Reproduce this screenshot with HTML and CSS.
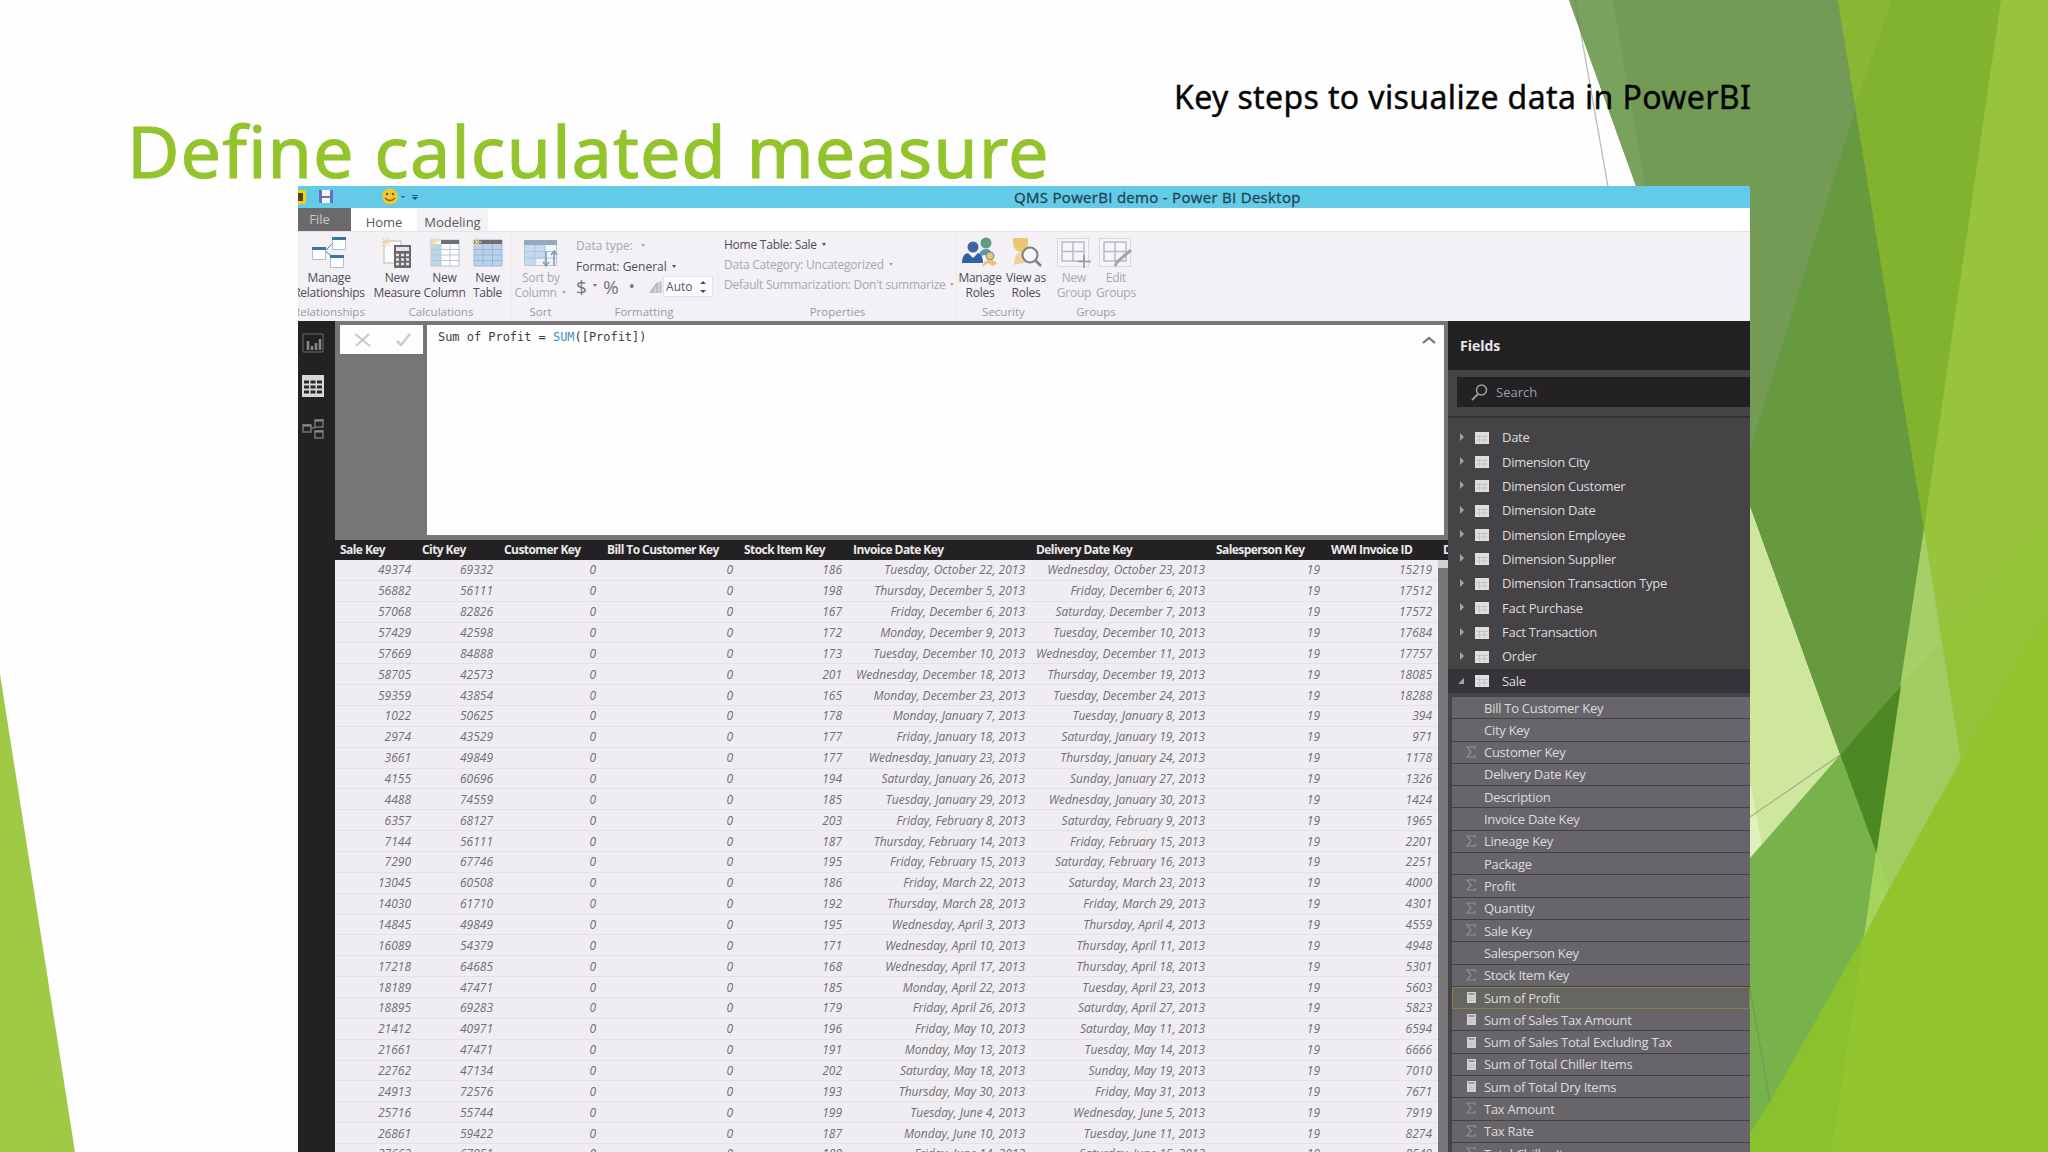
FILE: index.html
```
<!DOCTYPE html>
<html lang="en">
<head>
    <meta charset="UTF-8">
    <meta name="viewport" content="width=device-width, initial-scale=1.0">
    <title>Define calculated measure</title>
    <link rel="stylesheet" href="styles.css">
</head>
<body>
    <div class="slide">
        <svg class="facets" viewBox="0 0 2048 1152">
            <polygon points="0,674 75,1152 0,1152" fill="#a0ca45"/>
            <!-- solid ground so no white shows between the facets -->
            <polygon points="1842,0 2048,0 2048,1152 1752,1152 1868,925 1885,889 1900,687 1920,529" fill="#8fc040"/>
            <polygon points="1569,0 1840,0 1926,529 1902,687 1840,755 1636,186" fill="#739b55"/>
            <polygon points="1569,0 1613,0 1645,186 1636,186" fill="#79a25f"/>
            <polygon points="1855,110 1926,529 1902,687 1840,755 1750,507 1750,450" fill="#67993f"/>
            <polygon points="1750,507 1840,755 1750,858" fill="#cee79c"/>
            <polygon points="1750,782 1762,845 1750,858" fill="#ddf1bc"/>
            <polygon points="1750,858 1840,755 1891,889 1866,945 1750,1152" fill="#78b24b"/>
            <polygon points="1840,755 1902,685 1877,854" fill="#4c8922"/>
            <polygon points="1838,0 2002,0 1924,530" fill="#82b32e"/>
            <polygon points="1838,0 1892,0 1855,105" fill="#87b733"/>
            <polygon points="2001,0 2048,0 2048,612 1961,761 1924,529" fill="#97c43c"/>
            <polygon points="2048,518 2048,612 1961,761 1941,643" fill="#95c338"/>
            <polygon points="1924,529 1961,761 1889,890 1864,938" fill="#a1cc5f"/>
            <polygon points="1924,529 1941,643 1900,687" fill="#a4d067"/>
            <polygon points="1876,852 1889,889 1864,938" fill="#a4d35e"/>
            <polygon points="2048,611 2048,1152 1738,1152 1770,1102 1864,937 1889,889 1961,760" fill="#92c42e"/>
            <polygon points="1864,935 1831,1152 1738,1152 1770,1102" fill="#8bc12c"/>
            <path d="M1575 0L1770 1102M1840 755L1750 817" fill="none" stroke="#70816a" stroke-opacity=".5" stroke-width="1.3"/>
        </svg>

        <h1 class="slide-title">Define calculated measure</h1>
        <div class="slide-note">Key steps to visualize data in PowerBI</div>

        <div class="app">
            <div class="titlebar">
                <div class="quick-access">
                    <svg width="130" height="22" viewBox="0 0 130 22">
                        <rect x="-4" y="4" width="12" height="14" rx="2" fill="#f4d20c"/>
                        <path d="M0 7h5v8H0z" fill="#55421a"/>
                        <path d="M21 4h14v13H21z" fill="#6a70b8"/>
                        <path d="M24 4h8v6h-8zM24 12h8v5h-8z" fill="#f5f5fa"/>
                        <path d="M47 12q4-5 9 0M66 12q4-5 9 0" fill="none" stroke="#79c0de"/>
                        <circle cx="92" cy="10.500" r="8" fill="#efca2e"/>
                        <circle cx="89" cy="8" r="1.200" fill="#7a4d15"/><circle cx="95" cy="8" r="1.200" fill="#7a4d15"/>
                        <path d="M87 12q5 5 10 0" fill="none" stroke="#8c5a19" stroke-width="1.400"/>
                        <path d="M103 10h4l-2 2zM114 9h6v1h-6zM114 11h6l-3 3z" fill="#24546b"/>
                    </svg>
                </div>
                <span class="window-name">QMS PowerBI demo - Power BI Desktop</span>
            </div>

            <div class="tabs">
                <div class="tab tab-file">File</div>
                <div class="tab tab-home">Home</div>
                <div class="tab tab-modeling">Modeling</div>
            </div>

            <div class="ribbon">
                <div class="group group-relationships">
                    <div class="group-body">
                        <div class="tool">
                            <svg width="36" height="32" viewBox="0 0 36 32">
                                <path d="M14 14l8-8M14 14l8 6" stroke="#4c8bab" fill="none"/>
                                <g fill="#fff" stroke="#a9c3d0"><path d="M1.500 11.500h13v11h-13zM21.500 1.500h13v11h-13zM19.500 19.500h13v11h-13z"/></g>
                                <path d="M1 10h14v3H1zM21 0h14v3H21zM19 18h14v3H19z" fill="#37799c"/>
                            </svg>
                            <span>Manage<br>Relationships</span>
                        </div>
                    </div>
                    <div class="group-name">Relationships</div>
                </div>
                <div class="group group-calculations">
                    <div class="group-body">
                        <div class="tool">
                            <svg width="32" height="32" viewBox="0 0 32 32">
                                <path d="M3 4h17v22H3z" fill="#fbfafb" stroke="#c4b9a4"/>
                                <path d="M5 0v10M0 5h10M1 1l8 8M9 1l-8 8" stroke="#ecd5a0"/>
                                <path d="M13 8h17v23H13z" fill="#6a686b"/>
                                <path d="M15 10h13v4H15z" fill="#e6e6e8"/>
                                <path d="M15 18h13M15 22.500h13M15 27h13" stroke="#e6e6e8" stroke-width="2.500" stroke-dasharray="3 2"/>
                            </svg>
                            <span>New<br>Measure</span>
                        </div>
                        <div class="tool">
                            <svg width="32" height="32" viewBox="0 0 32 32">
                                <path d="M2 3h28v26H2z" fill="#fff" stroke="#b8c4cc"/>
                                <path d="M2 7h10v22H2z" fill="#b9d5ea"/>
                                <path d="M12 3h18v4H12z" fill="#716e73"/>
                                <path d="M2 12.500h28M2 18h28M2 23.500h28M12 7v22M21 7v22" stroke="#b4c9cf"/>
                                <path d="M5 0v10M0 5h10M1 1l8 8M9 1l-8 8" stroke="#ecd5a0"/>
                            </svg>
                            <span>New<br>Column</span>
                        </div>
                        <div class="tool">
                            <svg width="32" height="32" viewBox="0 0 32 32">
                                <path d="M2 3h28v26H2z" fill="#b9d2ec" stroke="#a5b6c9"/>
                                <path d="M2 3h28v4H2z" fill="#716e73"/>
                                <path d="M2 12.500h28M2 18h28M2 23.500h28M11 7v22M20.500 7v22" stroke="#98b4d2"/>
                                <path d="M5 0v10M0 5h10M1 1l8 8M9 1l-8 8" stroke="#ecd5a0"/>
                            </svg>
                            <span>New<br>Table</span>
                        </div>
                    </div>
                    <div class="group-name">Calculations</div>
                </div>
                <div class="group group-sort">
                    <div class="group-body">
                        <div class="tool dim">
                            <svg width="36" height="32" viewBox="0 0 36 32">
                                <path d="M1.500 3.500h32v25h-32z" fill="#eef4fa" stroke="#b7c7d8"/>
                                <path d="M1 3h33v5H1z" fill="#94a9bd"/>
                                <path d="M2 8h10v20H2zM12 8h10v14H12z" fill="#c3d9ed"/>
                                <path d="M1 14.500h32M1 21h32M12 8v20M22 8v20" stroke="#aec5da"/>
                                <path d="M23 14v14M20 25l3 4 3-4M31 29V14M28 18l3-4 3 4" fill="none" stroke="#8a9caf" stroke-width="1.600"/>
                            </svg>
                            <span>Sort by<br>Column <i class="caret"></i></span>
                        </div>
                    </div>
                    <div class="group-name">Sort</div>
                </div>
                <div class="group group-formatting">
                    <div class="group-lines">
                        <div class="line dim">Data type: &nbsp;<i class="caret"></i></div>
                        <div class="line">Format: General <i class="caret"></i></div>
                        <div class="line number-format">
                            <span>$</span><i class="caret"></i><span>%</span><b>&bull;</b>
                            <svg width="14" height="14" viewBox="0 0 14 14"><path d="M1 13L9 2h4v11z" fill="#d3d1d5"/><path d="M2 13l7-10M5 13V9M9 13V4M13 13V1" stroke="#aaa8ad" fill="none"/></svg>
                            <span class="spinner">Auto<svg width="8" height="14" viewBox="0 0 8 14"><path d="M1 4l3-3 3 3zM1 10h6l-3 3z" fill="#4c4a4e"/></svg></span>
                        </div>
                    </div>
                    <div class="group-name">Formatting</div>
                </div>
                <div class="group group-properties">
                    <div class="group-lines">
                        <div class="line">Home Table: Sale <i class="caret"></i></div>
                        <div class="line dim">Data Category: Uncategorized <i class="caret"></i></div>
                        <div class="line dim">Default Summarization: Don't summarize <i class="caret"></i></div>
                    </div>
                    <div class="group-name">Properties</div>
                </div>
                <div class="group group-security">
                    <div class="group-body">
                        <div class="tool">
                            <svg width="36" height="32" viewBox="0 0 36 32">
                                <circle cx="24" cy="6" r="5.500" fill="#639c83"/>
                                <path d="M17 19q1-7 7-7 5 0 6 5z" fill="#5a94b4"/>
                                <circle cx="11" cy="10" r="5.500" fill="#3d64a8"/>
                                <path d="M0 26q0-9 6-10l5 5 5-5q5 1 5 10z" fill="#2f62a5"/>
                                <circle cx="28" cy="19" r="4" fill="#edc27f" stroke="#8c8579"/>
                                <path d="M20 30q1-7 8-7 6 0 7 4l-5 2-4-3z" fill="#edc27f"/>
                            </svg>
                            <span>Manage<br>Roles</span>
                        </div>
                        <div class="tool">
                            <svg width="32" height="32" viewBox="0 0 32 32">
                                <path d="M3 1h15v7q0 6-7 7-8-2-8-8z" fill="#edc673"/>
                                <path d="M4 28q0-12 7-13l7 2v8z" fill="#f1d391"/>
                                <circle cx="20" cy="18" r="7.500" fill="#f6f5f8" stroke="#817e83" stroke-width="2"/>
                                <path d="M25 23l6 6" stroke="#817e83" stroke-width="2.500"/>
                            </svg>
                            <span>View as<br>Roles</span>
                        </div>
                    </div>
                    <div class="group-name">Security</div>
                </div>
                <div class="group group-groups">
                    <div class="group-body">
                        <div class="tool dim">
                            <svg width="36" height="32" viewBox="0 0 36 32">
                                <path d="M1.500 1.500h31v28h-31z" fill="#f6f5fa" stroke="#cbcad6" stroke-dasharray="2 1"/>
                                <path d="M6 5h22v19H6zM17 5v19M6 14.500h22" fill="none" stroke="#b5bacb" stroke-width="1.500"/>
                                <path d="M28 18v13M22 24.500h13" stroke="#9895a0" stroke-width="1.600"/>
                            </svg>
                            <span>New<br>Group</span>
                        </div>
                        <div class="tool dim">
                            <svg width="36" height="32" viewBox="0 0 36 32">
                                <path d="M1.500 1.500h31v28h-31z" fill="#f6f5fa" stroke="#cbcad6" stroke-dasharray="2 1"/>
                                <path d="M6 5h22v19H6zM17 5v19M6 14.500h22" fill="none" stroke="#b5bacb" stroke-width="1.500"/>
                                <path d="M17 29l2-4 14-12" fill="none" stroke="#a5a3ab" stroke-width="3"/>
                            </svg>
                            <span>Edit<br>Groups</span>
                        </div>
                    </div>
                    <div class="group-name">Groups</div>
                </div>
            </div>

            <div class="workspace">
                <div class="views">
                    <svg width="22" height="20" viewBox="0 0 22 20"><path d="M1 1h20v18H1z" fill="none" stroke="#6d6a6e"/><path d="M6 17V8M10 17v-4M14 17v-7M18 17V6" stroke="#8a878b" stroke-width="2.500"/></svg>
                    <svg width="22" height="22" viewBox="0 0 22 22"><path d="M0 0h22v22H0z" fill="#d8d6d9"/><path d="M2 7h18M2 12h18M2 17h18" stroke="#2c292d" stroke-width="3" stroke-dasharray="5 1.500"/></svg>
                    <svg width="22" height="20" viewBox="0 0 22 20"><path d="M1 6h8v7H1zM13 1h8v7h-8zM13 12h8v7h-8zM9 9h4" fill="none" stroke="#767377" stroke-width="1.500"/><path d="M1 6.500h8M13 1.500h8M13 12.500h8" stroke="#8d8a8e" stroke-width="2"/></svg>
                </div>

                <div class="data-view">
                    <div class="formula-bar">
                        <div class="formula-buttons">
                            <svg width="17" height="14" viewBox="0 0 17 14"><path d="M1 1l15 12M15 1L2 13" stroke="#cccacd" stroke-width="2.200"/></svg>
                            <svg width="15" height="14" viewBox="0 0 15 14"><path d="M1 8l4 4L14 1" fill="none" stroke="#cccacd" stroke-width="2.500"/></svg>
                        </div>
                        <div class="formula-input">
                            <code>Sum of Profit = <em>SUM</em>([Profit])</code>
                            <svg width="14" height="8" viewBox="0 0 14 8"><path d="M1 7l6-5 6 5" fill="none" stroke="#777578" stroke-width="2.200"/></svg>
                        </div>
                    </div>
                    <div class="grid-wrap">
                        <table class="grid">
                            <colgroup>
                                <col style="width:82px"><col style="width:82px"><col style="width:103px"><col style="width:137px"><col style="width:109px"><col style="width:183px"><col style="width:180px"><col style="width:115px"><col style="width:112px"><col style="width:10px">
                            </colgroup>
                            <thead>
                                <tr><th>Sale Key</th><th>City Key</th><th>Customer Key</th><th>Bill To Customer Key</th><th>Stock Item Key</th><th>Invoice Date Key</th><th>Delivery Date Key</th><th>Salesperson Key</th><th>WWI Invoice ID</th><th>D</th></tr>
                            </thead>
                            <tbody id="rows"></tbody>
                        </table>
                        <div class="scrollbar"></div>
                    </div>
                </div>

                <div class="fields">
                    <div class="fields-header">Fields</div>
                    <div class="search-area">
                        <div class="search">
                            <svg width="17" height="17" viewBox="0 0 17 17"><circle cx="10.500" cy="6" r="5" fill="none" stroke="#a19ea2" stroke-width="1.500"/><path d="M7 10l-6 6" stroke="#a19ea2" stroke-width="1.800"/></svg>
                            Search
                        </div>
                    </div>
                    <div class="tables" id="tables"></div>
                    <div class="columns" id="columns"></div>
                </div>
            </div>
        </div>
    </div>
    <script src="script.js"></script>
</body>
</html>
```

FILE: styles.css
```
body {
    margin: 0;
    background: #fff;
    font-family: "Open Sans", "Noto Sans", sans-serif;
}
.slide {
    position: relative;
    width: 2048px;
    height: 1152px;
    overflow: hidden;
    background: #fefefe;
}
.facets {
    position: absolute;
    left: 0;
    top: 0;
    width: 2048px;
    height: 1152px;
}
.slide-title {
    position: absolute;
    left: 127px;
    top: 100px;
    margin: 0;
    font: 400 72px/100px "Trebuchet MS", "Noto Sans", sans-serif;
    letter-spacing: 1px;
    color: #93c42b;
    -webkit-text-stroke: 1px #93c42b;
    white-space: nowrap;
}
.slide-note {
    position: absolute;
    left: 1174px;
    top: 75px;
    font: 400 32px/44px "Trebuchet MS", "Noto Sans", sans-serif;
    letter-spacing: 0.38px;
    color: #050505;
    -webkit-text-stroke: 0.4px #050505;
    white-space: nowrap;
}

/* Application window, cut off at the slide's bottom edge */
.app {
    position: absolute;
    left: 298px;
    top: 186px;
    width: 1452px;
    height: 966px;
    overflow: hidden;
    display: flex;
    flex-direction: column;
    background: #fff;
}
.titlebar {
    flex: none;
    display: flex;
    align-items: center;
    height: 22px;
    background: #63cae8;
    color: #1e4352;
    font-size: 15px;
    line-height: 22px;
}
.quick-access {
    width: 716px;
    height: 22px;
}
.window-name {
    letter-spacing: 0.3px;
    -webkit-text-stroke: 0.3px #1e4352;
    white-space: nowrap;
}
.tabs {
    flex: none;
    display: flex;
    height: 23px;
    font-size: 13px;
    line-height: 28px;
    color: #5a585b;
    text-align: center;
}
.tab-file {
    width: 53px;
    background: #6b696c;
    color: #c9c7ca;
    line-height: 23px;
    text-indent: -10px;
}
.tab-home {
    width: 66px;
}
.tab-modeling {
    width: 71px;
    background: #f4f2f5;
}
.ribbon {
    flex: none;
    display: flex;
    height: 90px;
    box-sizing: border-box;
    border-top: 1px solid #e4e2e5;
    background: #f3f1f5;
    font-size: 12px;
    color: #4f4d51;
    white-space: nowrap;
}
.group {
    flex: none;
    display: flex;
    flex-direction: column;
    box-sizing: border-box;
    border-right: 1px solid #eeecf0;
}
.group-body {
    display: flex;
    height: 72px;
}
.group-relationships { width: 73px; }
.group-calculations { width: 141px; }
.group-sort { width: 58px; }
.group-formatting { width: 149px; }
.group-properties { width: 238px; }
.group-security { width: 94px; }
.group-groups { width: 90px; border-right: none; }
.group-relationships .tool { width: 62px; }
.group-calculations .tool:nth-child(1) { width: 52px; }
.group-calculations .tool:nth-child(2) { width: 43px; }
.group-calculations .tool:nth-child(3) { width: 43px; }
.group-sort .tool { width: 58px; }
.group-security .tool { width: 46px; }
.group-groups .group-body { padding-left: 2px; }
.group-groups .tool { width: 42px; }
.tool {
    display: flex;
    flex-direction: column;
    align-items: center;
    flex: none;
    padding-top: 5px;
    line-height: 14.5px;
    text-align: center;
}
.tool svg {
    flex: none;
    margin-bottom: 2px;
}
.tool span {
    letter-spacing: -0.25px;
}
.dim {
    color: #a9a7ac;
}
.group-name {
    font-size: 11.5px;
    line-height: 15px;
    color: #9b999e;
    text-align: center;
}
.group-relationships .group-name {
    margin-left: -10px;
}
.caret {
    display: inline-block;
    margin: 0 2px 3px;
    border: 2.5px solid transparent;
    border-top: 3px solid currentColor;
    border-bottom: 0;
}
.group-lines {
    height: 72px;
    padding: 2px 0 0 6px;
    box-sizing: border-box;
}
.line {
    height: 21px;
    line-height: 24px;
}
.group-properties .line {
    height: 20px;
    line-height: 22px;
    letter-spacing: -0.24px;
}
.group-properties .group-lines {
    padding-left: 5px;
}
.number-format {
    display: flex;
    align-items: center;
    gap: 4px;
    font-size: 19px;
    color: #77757a;
}
.number-format b {
    margin: 0 10px 0 7px;
    font-size: 12px;
}
.spinner {
    display: flex;
    align-items: center;
    justify-content: space-between;
    width: 50px;
    height: 21px;
    margin-left: -3px;
    padding: 0 5px 0 2px;
    box-sizing: border-box;
    border: 1px solid #e3e1e5;
    background: #fdfcfe;
    font-size: 12px;
    color: #59575b;
}

.workspace {
    flex: 1;
    display: flex;
    min-height: 0;
}
.views {
    width: 37px;
    display: flex;
    flex-direction: column;
    align-items: center;
    gap: 22px;
    padding: 12px 7px 0 0;
    box-sizing: border-box;
    background: #242124;
}
.data-view {
    width: 1113px;
    display: flex;
    flex-direction: column;
}
.formula-bar {
    flex: none;
    display: flex;
    align-items: flex-start;
    gap: 4px;
    height: 219px;
    padding: 4px 4px 5px 5px;
    box-sizing: border-box;
    background: #777577;
}
.formula-buttons {
    display: flex;
    align-items: center;
    justify-content: space-between;
    width: 83px;
    height: 29px;
    padding: 0 12px 0 14px;
    box-sizing: border-box;
    background: #fefdfe;
}
.formula-input {
    flex: 1;
    display: flex;
    justify-content: space-between;
    height: 210px;
    padding: 4px 8px 0 11px;
    box-sizing: border-box;
    background: #fefdfe;
}
.formula-input code {
    font: 11.95px/16px "DejaVu Sans Mono", monospace;
    color: #3e3c40;
}
.formula-input em {
    font-style: normal;
    color: #4a8dbb;
}
.formula-input svg {
    margin-top: 7px;
}
.grid-wrap {
    display: flex;
    align-items: flex-start;
    width: 1113px;
    background: #efedf1;
    position: relative;
}
.grid {
    width: 1113px;
    table-layout: fixed;
    border-collapse: separate;
    border-spacing: 0;
    white-space: nowrap;
}
.grid th {
    height: 20px;
    padding: 0 0 0 5px;
    background: #242124;
    color: #eceaec;
    font-size: 12px;
    font-weight: 700;
    line-height: 18px;
    letter-spacing: -0.57px;
    text-align: left;
    overflow: hidden;
}
.grid td {
    height: 20.86px;
    padding: 0 6px 0 0;
    box-sizing: border-box;
    border-bottom: 1px solid #e4e2e6;
    color: #706e72;
    font-size: 12px;
    font-style: italic;
    line-height: 19px;
    text-align: right;
}
/* Lies over the header's last narrow column */
.scrollbar {
    position: absolute;
    right: 0;
    top: 20px;
    bottom: 0;
    width: 10px;
    box-sizing: border-box;
    border-top: 8px solid #d2d0d3;
    background: #777578;
}

.fields {
    flex: 1;
    display: flex;
    flex-direction: column;
    min-width: 0;
    background: #454346;
    color: #dddbde;
    font-size: 13px;
    letter-spacing: -0.27px;
    white-space: nowrap;
}
.fields-header {
    flex: none;
    height: 49px;
    padding-left: 12px;
    background: #242125;
    font-size: 14px;
    font-weight: 700;
    letter-spacing: 0;
    line-height: 49px;
    color: #e8e6e9;
}
.search-area {
    flex: none;
    height: 48px;
    padding: 7px 0 0 9px;
    box-sizing: border-box;
    border-bottom: 2px solid #333135;
}
.search {
    display: flex;
    align-items: center;
    gap: 8px;
    height: 30px;
    padding-left: 14px;
    background: #242125;
    color: #9f9da0;
    letter-spacing: 0;
    line-height: 30px;
}
.tables {
    flex: none;
    padding-top: 7px;
}
.table-row {
    display: flex;
    align-items: center;
    height: 24.36px;
    padding-left: 11px;
}
.table-row svg {
    margin-right: 13px;
}
.table-row.open {
    background: #363438;
}
.columns {
    flex: none;
    margin: 4px 0 0 4px;
}
.column-row {
    display: flex;
    align-items: center;
    height: 22.3px;
    padding-left: 13px;
    box-sizing: border-box;
    border-bottom: 1px solid #434145;
    background: #676569;
}
.column-row .mark {
    width: 19px;
    height: 13px;
    color: #99979b;
}
.column-row.selected {
    border: 1px solid #82824a;
    padding-left: 12px;
    background: #66655f;
}
```

FILE: script.js
```
const sales = [
    [49374, 69332, 186, 'Tuesday, October 22', 'Wednesday, October 23', 15219],
    [56882, 56111, 198, 'Thursday, December 5', 'Friday, December 6', 17512],
    [57068, 82826, 167, 'Friday, December 6', 'Saturday, December 7', 17572],
    [57429, 42598, 172, 'Monday, December 9', 'Tuesday, December 10', 17684],
    [57669, 84888, 173, 'Tuesday, December 10', 'Wednesday, December 11', 17757],
    [58705, 42573, 201, 'Wednesday, December 18', 'Thursday, December 19', 18085],
    [59359, 43854, 165, 'Monday, December 23', 'Tuesday, December 24', 18288],
    [1022, 50625, 178, 'Monday, January 7', 'Tuesday, January 8', 394],
    [2974, 43529, 177, 'Friday, January 18', 'Saturday, January 19', 971],
    [3661, 49849, 177, 'Wednesday, January 23', 'Thursday, January 24', 1178],
    [4155, 60696, 194, 'Saturday, January 26', 'Sunday, January 27', 1326],
    [4488, 74559, 185, 'Tuesday, January 29', 'Wednesday, January 30', 1424],
    [6357, 68127, 203, 'Friday, February 8', 'Saturday, February 9', 1965],
    [7144, 56111, 187, 'Thursday, February 14', 'Friday, February 15', 2201],
    [7290, 67746, 195, 'Friday, February 15', 'Saturday, February 16', 2251],
    [13045, 60508, 186, 'Friday, March 22', 'Saturday, March 23', 4000],
    [14030, 61710, 192, 'Thursday, March 28', 'Friday, March 29', 4301],
    [14845, 49849, 195, 'Wednesday, April 3', 'Thursday, April 4', 4559],
    [16089, 54379, 171, 'Wednesday, April 10', 'Thursday, April 11', 4948],
    [17218, 64685, 168, 'Wednesday, April 17', 'Thursday, April 18', 5301],
    [18189, 47471, 185, 'Monday, April 22', 'Tuesday, April 23', 5603],
    [18895, 69283, 179, 'Friday, April 26', 'Saturday, April 27', 5823],
    [21412, 40971, 196, 'Friday, May 10', 'Saturday, May 11', 6594],
    [21661, 47471, 191, 'Monday, May 13', 'Tuesday, May 14', 6666],
    [22762, 47134, 202, 'Saturday, May 18', 'Sunday, May 19', 7010],
    [24913, 72576, 193, 'Thursday, May 30', 'Friday, May 31', 7671],
    [25716, 55744, 199, 'Tuesday, June 4', 'Wednesday, June 5', 7919],
    [26861, 59422, 187, 'Monday, June 10', 'Tuesday, June 11', 8274],
    [27663, 67951, 180, 'Friday, June 14', 'Saturday, June 15', 8549]
];

document.getElementById('rows').innerHTML = sales.map(([sale, city, stock, invoice, delivery, id]) => {
    const cells = [sale, city, 0, 0, stock, invoice + ', 2013', delivery + ', 2013', 19, id, ''];
    return '<tr>' + cells.map(c => `<td>${c}</td>`).join('') + '</tr>';
}).join('');

const tables = ['Date', 'Dimension City', 'Dimension Customer', 'Dimension Date', 'Dimension Employee',
    'Dimension Supplier', 'Dimension Transaction Type', 'Fact Purchase', 'Fact Transaction', 'Order', 'Sale'];

document.getElementById('tables').innerHTML = tables.map(name => {
    const open = name === 'Sale';
    const arrow = open ? 'M5 4v6H-1z' : 'M1 2l4 4-4 4z';
    return `<div class="table-row${open ? ' open' : ''}">
        <svg width="30" height="13" viewBox="0 0 30 13"><path d="${arrow}" fill="#a5a3a6"/>
        <path d="M16 1h14v12H16z" fill="#e0dee1"/><path d="M17 5.500h12M17 9h12M20.500 4v8M25.500 4v8" stroke="#c0bec1" stroke-width=".8"/></svg>${name}</div>`;
}).join('');

// s = summed column, m = measure
const columns = [
    ['', 'Bill To Customer Key'], ['', 'City Key'], ['s', 'Customer Key'], ['', 'Delivery Date Key'],
    ['', 'Description'], ['', 'Invoice Date Key'], ['s', 'Lineage Key'], ['', 'Package'], ['s', 'Profit'],
    ['s', 'Quantity'], ['s', 'Sale Key'], ['', 'Salesperson Key'], ['s', 'Stock Item Key'],
    ['m', 'Sum of Profit'], ['m', 'Sum of Sales Tax Amount'], ['m', 'Sum of Sales Total Excluding Tax'],
    ['m', 'Sum of Total Chiller Items'], ['m', 'Sum of Total Dry Items'], ['s', 'Tax Amount'],
    ['s', 'Tax Rate'], ['s', 'Total Chiller Items']
];
const marks = {
    '': '',
    s: '<path d="M10 3V1H2l4 5-4 5h8V9" fill="none" stroke="#949296" stroke-width="1.2"/>',
    m: '<path d="M2 1h9v11H2z" fill="#d2d0d3"/><path d="M3.500 3h6" stroke="#89878b" stroke-width="1.500"/><path d="M4 7h5M4 9.500h5" stroke="#aaa8ac" stroke-dasharray="1 1"/>'
};

document.getElementById('columns').innerHTML = columns.map(([type, name]) =>
    `<div class="column-row${name === 'Sum of Profit' ? ' selected' : ''}"><svg class="mark" viewBox="0 0 19 13">${marks[type]}</svg>${name}</div>`
).join('');
```
